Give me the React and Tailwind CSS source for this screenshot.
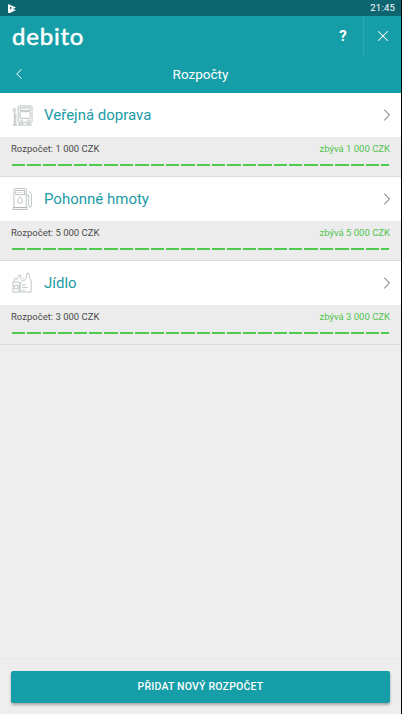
import React from "react";
import { ChevronLeft, ChevronRight, X } from "lucide-react";

const TransportIcon = () => (
  <svg width="21" height="21" viewBox="0 0 22 22" fill="none" stroke="#a9b1b3" strokeWidth="0.8">
    <rect x="6.5" y="1" width="14.5" height="17" rx="1" />
    <rect x="8.5" y="3" width="10.5" height="2.5" />
    <rect x="8.5" y="7" width="10.5" height="7" rx="0.5" />
    <path d="M8.500 16h3M16 16h3M8 18v2h3v-2M16 18v2h3v-2" />
    <circle cx="2.500" cy="5" r="1.500" />
    <path d="M2.500 6.500v14.500M4 9v12M0.500 21h20.500" />
  </svg>
);

const FuelIcon = () => (
  <svg width="21" height="24" viewBox="0 0 22 24" fill="none" stroke="#a9b1b3" strokeWidth="0.8">
    <rect x="2" y="1" width="13" height="20" rx="1.500" />
    <rect x="4" y="3" width="9" height="4.500" />
    <path d="M6 5.200h5" strokeDasharray="1 1" />
    <path d="M8.500 9.500c1.500 2 2.500 3.300 2.500 4.700a2.500 2.500 0 0 1-5 0c0-1.400 1-2.700 2.500-4.700z" />
    <path d="M1 21h15v2H1zM15 8h2.500v11a1.500 1.500 0 0 0 3 0V7l-2.500-3" />
  </svg>
);

const FoodIcon = () => (
  <svg width="20" height="22" viewBox="0 0 22 24" fill="none" stroke="#a9b1b3" strokeWidth="0.8">
    <path d="M1 11h7v11H1zM2.500 14.500h4v4h-4z" />
    <path d="M2 11l1-4h2l1 2M6 7l2-4 2 1-1 4" />
    <path d="M9 22V12l3-3h2l2-3V3l1-2h1l1 2v3l2 3v13z" />
    <path d="M11 14h4M11 17h6M11 20h3M11 8l2-2" />
  </svg>
);

const budgets = [
  { name: "Veřejná doprava", total: "1 000", Icon: TransportIcon },
  { name: "Pohonné hmoty", total: "5 000", Icon: FuelIcon },
  { name: "Jídlo", total: "3 000", Icon: FoodIcon },
];

const dashes = Array.from({ length: 25 }, (_, i) => i);

const BudgetRow = ({ name, total, Icon }) => (
  <div>
    <div className="flex h-11 items-center bg-white pl-3 pr-[4px]">
      <div className="flex w-[32px] items-center">
        <Icon />
      </div>
      <span className="flex-1 text-[15px] text-[#1a9ba6]">{name}</span>
      <ChevronRight size={20} strokeWidth={1.2} className="text-[#555a5c]" />
    </div>
    <div className="h-10 border-b border-[#dcdcdc] bg-[#ececec] px-[11px] pt-[6px]">
      <div className="flex h-[13px] items-center justify-between text-[9.5px]">
        <span className="text-[#4a4a4a]">Rozpočet: {total} CZK</span>
        <span className="text-[#4fc44f]">zbývá {total} CZK</span>
      </div>
      <div className="ml-px mt-[8px] flex w-[377px] gap-[2px] overflow-hidden">
        {dashes.map((i) => (
          <span key={i} className="h-[2px] w-[13.4px] shrink-0 bg-[#4fc94f]" />
        ))}
      </div>
    </div>
  </div>
);

export default function App() {
  return (
    <div className="flex h-[714px] w-[402px] flex-col overflow-hidden border-r border-black bg-[#eeeeee] font-['Roboto','Liberation_Sans',sans-serif]">
      <div className="flex h-4 items-center justify-between bg-[#0d6570] pl-2 pr-[6px]">
        <svg width="9" height="9" viewBox="0 0 9 9" fill="#ffffff">
          <path d="M0 0l8 3.500L5 5l3 1-6 3H0zM2 2.500v3l2-1.500z" />
        </svg>
        <span className="text-[9.5px] tracking-[0.2px] text-white">21:45</span>
      </div>

      <div className="bg-[#169ea8] text-white">
        <div className="flex h-[40px] items-center justify-between pl-3">
          <span className="font-['Lato',sans-serif] text-[24px] font-normal leading-none tracking-[0.8px] [-webkit-text-stroke:0.5px_white]">
            debito
          </span>
          <div className="flex h-[40px] items-stretch">
            <div className="flex w-[40px] items-center justify-center text-[15px] font-bold">?</div>
            <div className="flex w-[38px] items-center justify-center border-l border-[#2aa9b2]">
              <X size={18} strokeWidth={1.4} />
            </div>
          </div>
        </div>
        <div className="relative flex h-[37px] items-center justify-center">
          <ChevronLeft size={18} strokeWidth={1.3} className="absolute left-[10px] top-[9px]" />
          <span className="text-[13.500px] font-normal">Rozpočty</span>
        </div>
      </div>

      <div className="flex-1">
        {budgets.map((b) => (
          <BudgetRow key={b.name} {...b} />
        ))}
      </div>

      <div className="border-t border-[#e8e8e8] px-[11px] pb-[11px] pt-[12px]">
        <button className="flex h-[32px] w-[379px] items-center justify-center rounded-[2px] bg-[#169ea8] text-[10.500px] font-medium tracking-[0.2px] text-white shadow-[0_2px_3px_rgba(0,0,0,0.3)]">
          PŘIDAT NOVÝ ROZPOČET
        </button>
      </div>
    </div>
  );
}
